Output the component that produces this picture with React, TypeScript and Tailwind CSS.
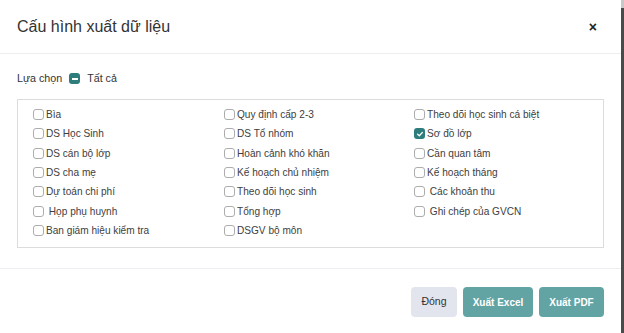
import React, { useState } from 'react';

const COLUMNS = [
    ['Bìa', 'DS Học Sinh', 'DS cán bộ lớp', 'DS cha mẹ', 'Dự toán chi phí', ' Họp phụ huynh', 'Ban giám hiệu kiểm tra'],
    ['Quy định cấp 2-3', 'DS Tổ nhóm', 'Hoàn cảnh khó khăn', 'Kế hoạch chủ nhiệm', 'Theo dõi học sinh', 'Tổng hợp', 'DSGV bộ môn'],
    ['Theo dõi học sinh cá biệt', 'Sơ đồ lớp', 'Cần quan tâm', 'Kế hoạch tháng', ' Các khoản thu', ' Ghi chép của GVCN'],
];

const Box: React.FC<{ checked?: boolean; partial?: boolean }> = ({ checked, partial }) => {
    if (partial) {
        return (
            <span className="w-[11px] h-[11px] rounded-[3px] bg-[#2e7d7d] flex items-center justify-center shrink-0">
                <span className="w-[6px] h-[2px] bg-white" />
            </span>
        );
    }
    if (checked) {
        return (
            <span className="w-[11px] h-[11px] rounded-[3px] bg-[#2e7d7d] flex items-center justify-center shrink-0">
                <svg viewBox="0 0 10 10" className="w-[8px] h-[8px]">
                    <path d="M2 5.2 L4.2 7.2 L8 3" stroke="white" strokeWidth="1.6" fill="none" strokeLinecap="round" strokeLinejoin="round" />
                </svg>
            </span>
        );
    }
    return <span className="w-[11px] h-[11px] rounded-[3px] border border-[#adadad] bg-white shrink-0" />;
};

export default function App() {
    const [checked, setChecked] = useState<Record<string, boolean>>({ 'Sơ đồ lớp': true });

    return (
        <div className="w-[624px] h-[333px] bg-white flex font-['Liberation_Sans',Arial,sans-serif] text-[#3a3a3a] overflow-hidden">
            <div className="flex-1 flex flex-col">
                {/* Header */}
                <div className="h-[54px] flex items-center justify-between pl-[17px] pr-[24px] border-b border-[#eceef2]">
                    <span className="text-[16px] text-[#333]">Cấu hình xuất dữ liệu</span>
                    <span className="text-[14px] font-bold text-[#222] leading-none">×</span>
                </div>

                {/* Body */}
                <div className="px-[17px] pt-[16px] h-[215px] border-b border-[#eceef2]">
                    <div className="flex items-center h-[17px] text-[10.7px] text-[#333]">
                        <span>Lựa chọn</span>
                        <span className="ml-[7px] mr-[7px]"><Box partial /></span>
                        <span>Tất cả</span>
                    </div>
                    <div className="mt-[12px] border border-[#dcdcdc] pl-[15px] pt-[5px] pb-[7px] grid grid-cols-[191px_190px_1fr] text-[10.1px] text-[#404040]">
                        {COLUMNS.map((col, ci) => (
                            <div key={ci} className="flex flex-col">
                                {col.map((label) => (
                                    <label
                                        key={label}
                                        className="h-[19.3px] flex items-center gap-[2px] whitespace-pre cursor-pointer"
                                        onClick={() => setChecked((p) => ({ ...p, [label]: !p[label] }))}
                                    >
                                        <Box checked={!!checked[label]} />
                                        <span>{label}</span>
                                    </label>
                                ))}
                            </div>
                        ))}
                    </div>
                </div>

                {/* Footer */}
                <div className="flex justify-end gap-[6px] pr-[17px] pt-[18px]">
                    <button className="h-[30px] w-[46px] rounded-[4px] bg-[#e3e5ee] text-[10.5px] text-[#333]">Đóng</button>
                    <button className="h-[30px] w-[70px] rounded-[4px] bg-[#62a3a3] text-[10px] font-bold text-white">Xuất Excel</button>
                    <button className="h-[30px] w-[65px] rounded-[4px] bg-[#62a3a3] text-[10px] font-bold text-white">Xuất PDF</button>
                </div>
            </div>
            <div className="w-[3px] flex flex-col">
                <div className="h-[8px] bg-[#c8c8c8]" />
                <div className="flex-1 bg-[#4a4a4a]" />
            </div>
        </div>
    );
}
